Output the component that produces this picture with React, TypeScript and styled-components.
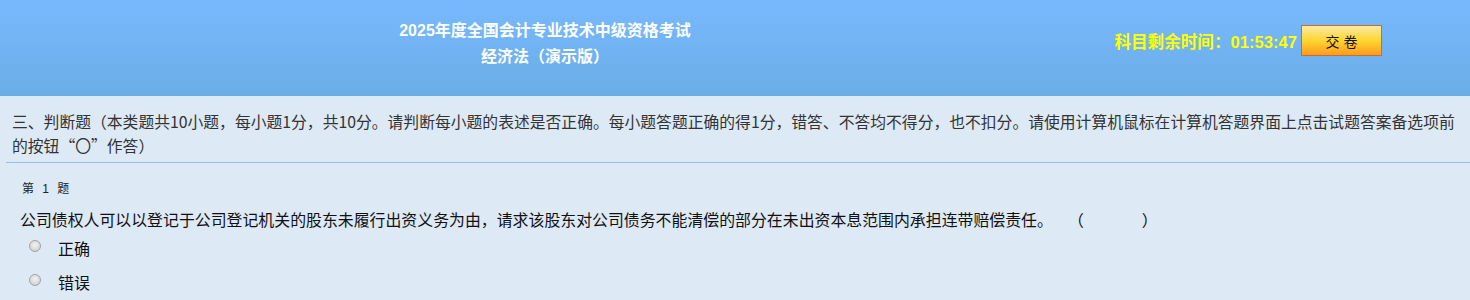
import React from "react";
import styled, { createGlobalStyle } from "styled-components";

const Global = createGlobalStyle`
  html, body { margin: 0; padding: 0; }
  body {
    background: #dde9f5;
    font-family: "Liberation Sans", "Noto Sans CJK SC", sans-serif;
    color: #222;
  }
`;

const Page = styled.div`
  width: 1470px;
  min-height: 300px;
  background: #dde9f5;
`;

const Header = styled.header`
  height: 96px;
  display: grid;
  grid-template-columns: 1090px 1fr;
  align-items: start;
  background: linear-gradient(to bottom, #78b9fe 0%, #6aade6 100%);
`;

const TitleBlock = styled.div`
  display: flex;
  flex-direction: column;
  align-items: center;
  padding-top: 18px;
  color: #ffffff;
  font-weight: bold;
  font-size: 16px;
  line-height: 26px;
`;

const TimerBar = styled.div`
  display: flex;
  align-items: flex-start;
  justify-content: flex-end;
  gap: 4px;
  padding: 25px 88px 0 0;
`;

const Timer = styled.span`
  color: #ffff00;
  font-weight: bold;
  font-size: 16.6px;
  line-height: 20px;
  margin-top: 8px;
`;

const SubmitButton = styled.button`
  width: 81px;
  height: 31px;
  border: 1px solid #c8701c;
  background: linear-gradient(to bottom, #fbe9a4 0%, #ffd62e 50%, #ff9a22 100%);
  font-family: "Liberation Sans", "Noto Sans CJK SC", sans-serif;
  font-size: 14px;
  color: #111;
  padding: 0;
  cursor: pointer;
`;

const Instructions = styled.div`
  margin-left: 6px;
  padding: 14px 8px 4px 6px;
  border-bottom: 1px solid #9db9f3;
  font-family: "Noto Sans CJK SC", "Liberation Sans", sans-serif;
  font-size: 15.8px;
  line-height: 24px;
  color: #333;
`;

const Question = styled.div`
  padding: 17px 0 0 20px;
`;

const QuestionNo = styled.div`
  font-size: 12px;
  line-height: 18px;
  color: #222;
  padding-left: 2px;
  word-spacing: 5px;
`;

const Stem = styled.div`
  margin-top: 11px;
  font-size: 15.9px;
  line-height: 24px;
  color: #111;
`;

const Gap = styled.span<{ $w: number }>`
  display: inline-block;
  width: ${(p) => p.$w}px;
`;

const Options = styled.div`
  margin-top: 5px;
  display: flex;
  flex-direction: column;
  gap: 10px;
`;

const OptionRow = styled.label`
  display: flex;
  align-items: flex-start;
  gap: 17px;
  padding-left: 9px;
  font-size: 16px;
  line-height: 24px;
  color: #111;
`;

const Radio = styled.input.attrs({ type: "radio" })`
  appearance: none;
  -webkit-appearance: none;
  width: 12px;
  height: 12px;
  margin: 2px 0 0 0;
  border-radius: 50%;
  border: 1px solid #a3a3a3;
  background: radial-gradient(circle at 50% 40%, #f2f2f2 0%, #dcdcdc 55%, #c4c4c4 100%);
  box-sizing: border-box;
  flex: none;
`;

export default function App() {
  return (
    <Page>
      <Global />
      <Header>
        <TitleBlock>
          <span>2025年度全国会计专业技术中级资格考试</span>
          <span>经济法（演示版）</span>
        </TitleBlock>
        <TimerBar>
          <Timer>科目剩余时间：01:53:47</Timer>
          <SubmitButton>交 卷</SubmitButton>
        </TimerBar>
      </Header>
      <Instructions>
        三、判断题（本类题共10小题，每小题1分，共10分。请判断每小题的表述是否正确。每小题答题正确的得1分，错答、不答均不得分，也不扣分。请使用计算机鼠标在计算机答题界面上点击试题答案备选项前的按钮“〇”作答）
      </Instructions>
      <Question>
        <QuestionNo>第 1 题</QuestionNo>
        <Stem>
          公司债权人可以以登记于公司登记机关的股东未履行出资义务为由，请求该股东对公司债务不能清偿的部分在未出资本息范围内承担连带赔偿责任。<Gap $w={15} />（<Gap $w={58} />）
        </Stem>
        <Options>
          <OptionRow>
            <Radio name="q1" />
            <span>正确</span>
          </OptionRow>
          <OptionRow>
            <Radio name="q1" />
            <span>错误</span>
          </OptionRow>
        </Options>
      </Question>
    </Page>
  );
}
